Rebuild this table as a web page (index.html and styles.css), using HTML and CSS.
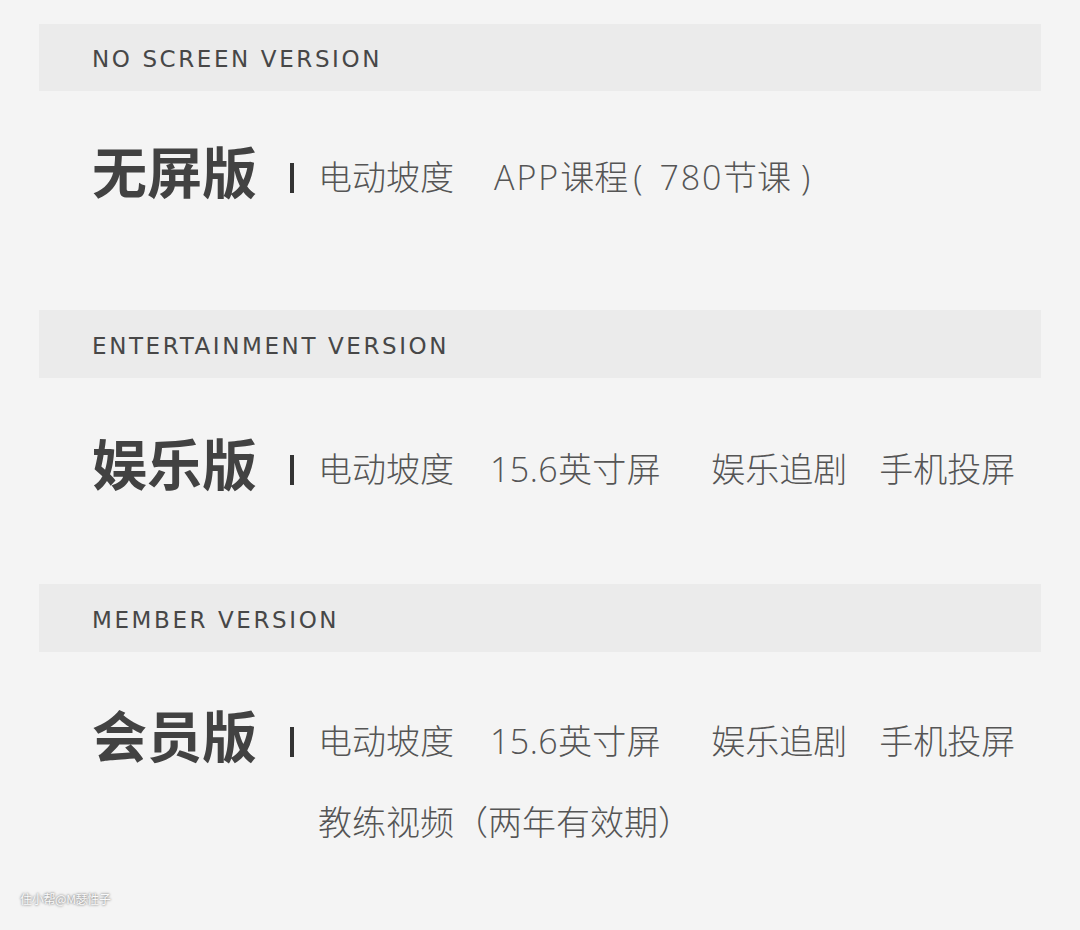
FILE: index.html
```html
<!DOCTYPE html>
<html lang="zh-CN">
<head>
<meta charset="utf-8">
<title>版本</title>
<link rel="stylesheet" href="styles.css">
</head>
<body>
<div class="page">
  <section class="version v1">
    <div class="band">NO SCREEN VERSION</div>
    <div class="row">
      <div class="title">无屏版</div>
      <span class="sep"></span>
      <div class="items">
        <span class="item">电动坡度</span>
        <span class="item app"><span class="lat">APP</span>课程<span class="paren">(</span>&ensp;<span class="num">780</span>节课 <span class="paren close">)</span></span>
      </div>
    </div>
  </section>
  <section class="version v2">
    <div class="band">ENTERTAINMENT VERSION</div>
    <div class="row">
      <div class="title">娱乐版</div>
      <span class="sep"></span>
      <div class="items">
        <span class="item">电动坡度</span>
        <span class="item wide">15.6英寸屏</span>
        <span class="item">娱乐追剧</span>
        <span class="item">手机投屏</span>
      </div>
    </div>
  </section>
  <section class="version v3">
    <div class="band">MEMBER VERSION</div>
    <div class="row">
      <div class="title">会员版</div>
      <span class="sep"></span>
      <div class="items">
        <span class="item">电动坡度</span>
        <span class="item wide">15.6英寸屏</span>
        <span class="item">娱乐追剧</span>
        <span class="item">手机投屏</span>
        <span class="item">教练视频（两年有效期）</span>
      </div>
    </div>
  </section>
</div>
<div class="watermark">住小帮@M瑟性子</div>
</body>
</html>
```
FILE: styles.css
```css
html, body {
  margin: 0;
  padding: 0;
  background: #f4f4f4;
}
body {
  width: 1080px;
  height: 930px;
  position: relative;
  overflow: hidden;
  font-family: "Noto Sans CJK SC", "Noto Sans", sans-serif;
}
.page {
  padding: 24px 39px 0 39px;
}
.band {
  height: 67px;
  background: #ebebeb;
  display: flex;
  align-items: center;
  padding-left: 53px;
  padding-top: 3px;
  box-sizing: border-box;
  font-family: "DejaVu Sans", sans-serif;
  font-size: 23px;
  line-height: 28px;
  font-weight: normal;
  letter-spacing: 2.6px;
  color: #474747;
}
.v2 .band, .v3 .band { height: 68px; }
.row {
  display: flex;
  align-items: flex-start;
  padding-left: 53px;
  box-sizing: border-box;
}
.v1 .row { height: 219px; padding-top: 50px; }
.v2 .row { height: 206px; padding-top: 55px; }
.v3 .row { padding-top: 53px; }
.title {
  font-size: 55px;
  line-height: 56px;
  font-weight: 700;
  color: #424242;
}
.sep {
  width: 4px;
  height: 30px;
  background: #333;
  margin: 22px 24px 0 33px;
  flex: none;
}
.items {
  display: flex;
  flex-wrap: wrap;
  column-gap: 32px;
  row-gap: 37px;
  margin-top: 14px;
  flex: 1;
}
.item {
  font-family: "Open Sans", "Noto Sans CJK SC", sans-serif;
  font-size: 34px;
  line-height: 44px;
  font-weight: 300;
  color: #555;
  white-space: nowrap;
}
.item.app {
  margin-left: 8px;
}
.lat {
  letter-spacing: 2px;
}
.num {
  letter-spacing: 1.8px;
}
.paren {
  margin-left: 5px;
}
.paren.close {
  margin-left: 1px;
}
.item.wide {
  margin-left: 4px;
  margin-right: 18px;
  letter-spacing: 0.4px;
}
.watermark {
  position: absolute;
  left: 20px;
  top: 891px;
  font-size: 12px;
  line-height: 16px;
  color: #fafafa;
  text-shadow: 0 0 2px #888, 0 0 3px #999;
  letter-spacing: -0.3px;
}
```
